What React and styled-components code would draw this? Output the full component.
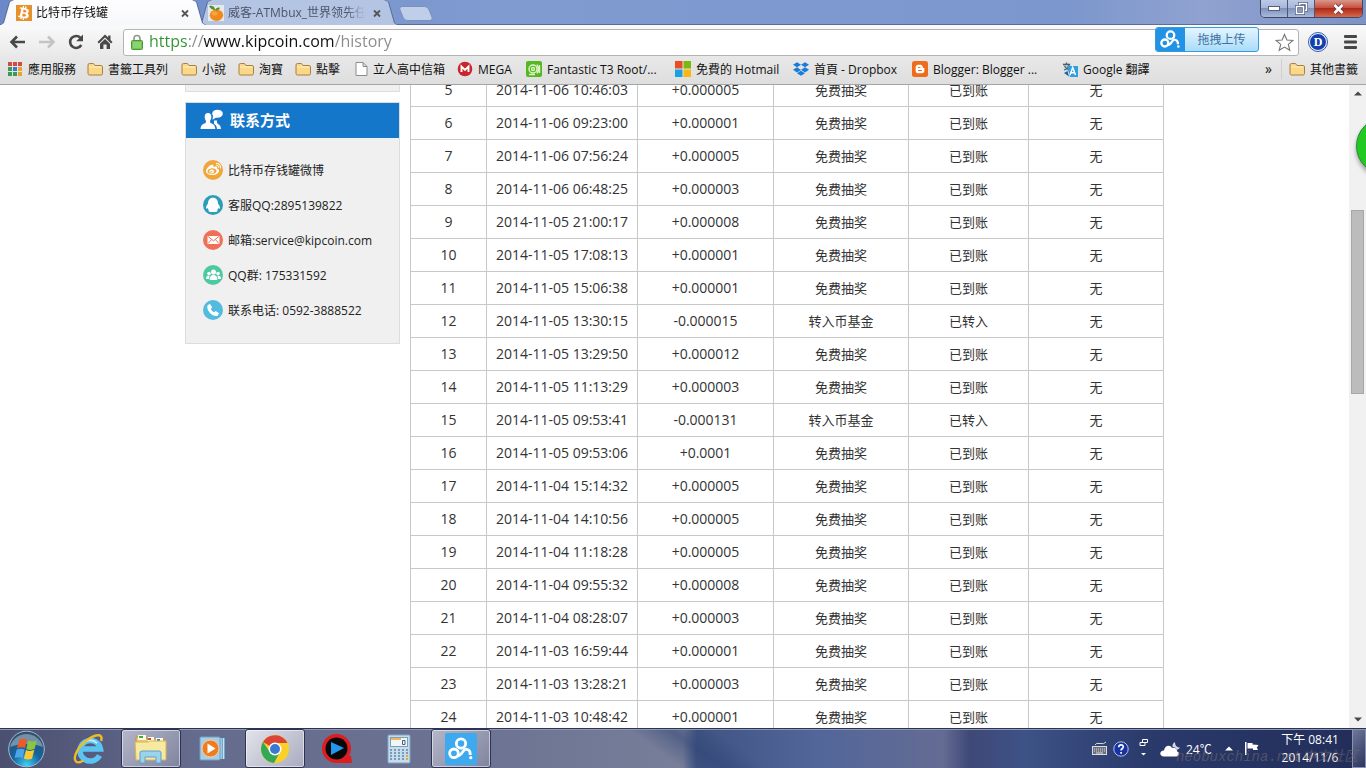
import React from 'react';
import styled, { createGlobalStyle } from 'styled-components';
import { FaBtc, FaDropbox, FaWeibo, FaBloggerB } from 'react-icons/fa';

const Sans = '"Open Sans", "Noto Sans CJK SC", sans-serif';
const SansTC = '"Open Sans", "Noto Sans CJK TC", sans-serif';
const Line = '#c8c8c8';

const GlobalStyle = createGlobalStyle`
  * {
    box-sizing: border-box;
  }
  body {
    margin: 0;
    font-family: ${Sans};
    font-size: 12px;
    color: #222;
  }
  button {
    padding: 0;
    border: none;
    background: none;
    font: inherit;
    color: inherit;
  }
  a {
    color: inherit;
    text-decoration: none;
  }
  svg {
    display: block;
    flex: none;
  }
`;

const Screen = styled.div`
  display: flex;
  flex-direction: column;
  height: 100vh;
  overflow: hidden;
  position: relative;
  background: #fff;
`;

/* window frame */

const TitleBar = styled.header`
  display: flex;
  flex: none;
  height: 25px;
  padding-right: 3px;
  border-bottom: 1px solid #596c9c;
  background: linear-gradient(90deg, #6b89c9 0%, #7f9bd0 36%, #7c97cd 78%, #8fa2d0 88%, #7d93c4 100%);
`;

const TabButton = styled.div`
  display: flex;
  align-items: center;
  position: relative;
  z-index: ${({ $active }) => ($active ? 2 : 1)};
  width: ${({ $active }) => ($active ? 206 : 200)}px;
  height: 25px;
  margin-left: ${({ $active }) => ($active ? 0 : -8)}px;
  padding: 0 15px 0 ${({ $active }) => ($active ? 16 : 10)}px;
  color: ${({ $active }) => ($active ? '#111' : '#4c5468')};
  &::before,
  &::after {
    content: '';
    position: absolute;
    inset: 0;
    z-index: -1;
    background: #5a6c98;
    clip-path: polygon(0 100%, 3px 92%, 9px 8%, 13px 0, calc(100% - 13px) 0, calc(100% - 9px) 8%, calc(100% - 3px) 92%, 100% 100%);
  }
  &::after {
    inset: 0 1px;
    background: ${({ $active }) => ($active ? 'linear-gradient(#fdfdfe, #f7f8fa)' : '#b4c4e3')};
  }
`;

const TabTitle = styled.span`
  flex: 1;
  margin-left: 4px;
  overflow: hidden;
  white-space: nowrap;
  line-height: 24px;
  mask-image: linear-gradient(90deg, #000 86%, transparent);
`;

const CloseTab = styled.button`
  width: 12px;
  margin-left: 6px;
`;

const NewTab = styled.button`
  width: 30px;
  height: 15px;
  margin: 6px 0 0 3px;
  border: 1px solid #7a91c0;
  border-radius: 4px;
  background: #c0cfe9;
  transform: skewX(22deg);
`;

const WindowButtons = styled.div`
  display: flex;
  height: 18px;
  margin-left: auto;
  border: 1px solid #3f4867;
  border-top: none;
  border-radius: 0 0 5px 5px;
  overflow: hidden;
`;

const WindowButton = styled.button`
  display: flex;
  align-items: center;
  justify-content: center;
  width: ${({ $close }) => ($close ? 47 : 27)}px;
  border-right: ${({ $close }) => ($close ? 'none' : '1px solid #4b5678')};
  background: ${({ $close }) =>
    $close
      ? 'linear-gradient(#d9978c, #c8503e 45%, #ac2a17 50%, #d6694c)'
      : 'linear-gradient(#bccae6, #a7b7d8 45%, #7f92bb 50%, #a9b9db)'};
`;

const ToolBar = styled.div`
  display: flex;
  align-items: center;
  flex: none;
  height: 31px;
  padding: 3px 9px 0 8px;
  background: linear-gradient(#fafafa, #e9e9e9);
`;

const NavButtons = styled.div`
  display: flex;
  gap: 9px;
  width: 115px;
  padding-bottom: 1px;
`;

const NavButton = styled.button`
  width: 20px;
  height: 20px;
`;

const Omnibox = styled.label`
  display: flex;
  align-items: center;
  flex: 1;
  height: 27px;
  padding: 0 4px 0 7px;
  border: 1px solid #b4b4b4;
  border-radius: 3px;
  background: #fff;
`;

const UrlInput = styled.input`
  flex: 1;
  min-width: 0;
  height: 24px;
  margin-left: 6px;
  padding: 0 0 2px;
  border: none;
  outline: none;
  font-family: ${Sans};
  font-size: 16px;
  color: transparent;
  background: linear-gradient(90deg, #2f9331 39px, #8b8b8b 39px 54px, #111 54px 186px, #8b8b8b 186px);
  background-clip: text;
`;

const RoundBadge = styled.button`
  width: 18px;
  height: 18px;
  margin: 0 17px 0 10px;
  border: 1px solid #fff;
  border-radius: 50%;
  outline: 1px solid #3459b5;
  background: #1440ae;
  color: #fff;
  font: bold 12px/15px 'Liberation Serif', serif;
`;

const BookmarkBar = styled.nav`
  display: flex;
  align-items: center;
  flex: none;
  height: 29px;
  padding: 0 8px 2px 7px;
  border-bottom: 1px solid #a5a5a5;
  background: linear-gradient(#e8e8e8, #dedede);
  font-family: ${SansTC};
  color: #111;
`;

const Bookmark = styled.a`
  display: flex;
  align-items: center;
  flex: none;
  gap: 5px;
  width: ${({ $width }) => ($width ? `${$width}px` : 'auto')};
  white-space: nowrap;
`;

const Overflow = styled.button`
  margin-left: auto;
  padding-right: 9px;
  font-size: 14px;
  line-height: 16px;
`;

const Divider = styled.span`
  width: 1px;
  height: 20px;
  margin-right: 7px;
  background: #cfcfcf;
`;

const UploadBox = styled.button`
  display: flex;
  position: absolute;
  z-index: 5;
  top: 27px;
  right: 107px;
  width: 104px;
  height: 25px;
  border: 1px solid #3d9ad9;
  border-radius: 3px;
  overflow: hidden;
  background: linear-gradient(#e3f5ff, #a9dcfb);
  color: #41719d;
`;

const UploadLogo = styled.span`
  display: flex;
  align-items: center;
  justify-content: center;
  width: 29px;
  height: 23px;
  background: #2192e4;
`;

const UploadText = styled.span`
  flex: 1;
  line-height: 24px;
`;

/* page */

const Viewport = styled.div`
  display: flex;
  flex: 1;
  min-height: 0;
  position: relative;
  overflow: hidden;
`;

const Page = styled.main`
  flex: 1;
  overflow: hidden;
`;

/* the page is scrolled a third of a row past row 5 */
const Content = styled.div`
  display: flex;
  align-items: flex-start;
  gap: 10px;
  max-width: 979px;
  margin: -12px auto 0;
`;

const SideBar = styled.aside`
  display: flex;
  flex-direction: column;
  flex: none;
  gap: 10px;
  width: 215px;
`;

const Panel = styled.section`
  min-height: 19px;
  border: 1px solid #ddd;
  background: #f0f0f0;
`;

const PanelTitle = styled.h2`
  display: flex;
  align-items: center;
  gap: 6px;
  height: 35px;
  margin: 0;
  padding: 0 0 2px 14px;
  background: #1577c9;
  color: #fff;
  font-size: 15px;
  font-weight: 700;
`;

const ContactList = styled.ul`
  margin: 0;
  padding: 14px 17px 16px;
  list-style: none;
`;

const ContactItem = styled.li`
  display: flex;
  align-items: center;
  gap: 5px;
  height: 35px;
  color: #222;
  white-space: nowrap;
`;

const Dot = styled.span`
  display: flex;
  align-items: center;
  justify-content: center;
  width: 20px;
  height: 20px;
  border-radius: 50%;
  background: ${({ $color }) => $color};
  color: #fff;
`;

const History = styled.table`
  flex: none;
  table-layout: fixed;
  border-collapse: collapse;
  width: 754px;
  color: #333;
  font-size: 13px;
`;

const Cell = styled.td`
  height: 33px;
  padding: 0;
  border: 1px solid ${Line};
  text-align: center;
  line-height: 20px;
  font-size: ${({ $num }) => ($num ? 14 : 13)}px;
`;

const ScrollBar = styled.div`
  display: flex;
  flex-direction: column;
  flex: none;
  width: 17px;
  padding: 0 2px;
  background: #f1f1f1;
`;

const ScrollArrow = styled.button`
  display: flex;
  align-items: center;
  justify-content: center;
  height: 17px;
`;

const Track = styled.div`
  flex: ${({ $grow }) => $grow};
`;

const Thumb = styled.div`
  flex: 183;
  border: 1px solid #a8a8a8;
  background: #bcbcbc;
`;

const GreenBall = styled.button`
  position: absolute;
  top: 32px;
  right: -48px;
  width: 58px;
  height: 58px;
  border: 1px solid #2c8a3a;
  border-radius: 50%;
  background: #22c922;
  box-shadow: 0 3px 4px rgba(0, 0, 0, 0.35);
`;

/* taskbar */

const TaskBar = styled.footer`
  display: flex;
  flex: none;
  height: 40px;
  position: relative;
  border-top: 1px solid #2b3357;
  box-shadow: inset 0 1px 0 #8f98b4;
  color: #fff;
  background: linear-gradient(35deg, transparent 0 48%, rgba(46, 66, 116, 0.5) 51%, transparent 54%),
    linear-gradient(90deg, #4b4f70 0, #646b8c 14%, #6b7292 33%, #777e99 50%, #3f5482 51%, #52669a 60%, #646c93 69%, #3f4977 71%, #3d5286 75%, #2a3a6b 84%, #222d59 100%);
`;

const StartButton = styled.button`
  width: 54px;
  padding-left: 7px;
`;

const Tasks = styled.div`
  display: flex;
  gap: 2px;
  padding: 0 0 0 5px;
`;

const Task = styled.button`
  display: flex;
  align-items: center;
  justify-content: center;
  width: 60px;
  height: 39px;
  border: 1px solid ${({ $open }) => ($open ? '#2d3350' : 'transparent')};
  border-radius: 3px;
  box-shadow: ${({ $open }) => ($open ? 'inset 0 0 0 1px rgba(255, 255, 255, 0.5)' : 'none')};
  background: ${({ $open, $front }) =>
    $front
      ? 'linear-gradient(135deg, #e2e3ea, #a9acc0)'
      : $open
        ? 'linear-gradient(135deg, #b4b6c8, #7f849f)'
        : 'none'};
`;

const Tray = styled.div`
  display: flex;
  align-items: center;
  margin-left: auto;
  font-family: ${SansTC};
`;

const TrayIcon = styled.button`
  display: flex;
  justify-content: center;
  width: ${({ $width }) => $width}px;
`;

const Weather = styled.span`
  width: 36px;
`;

const Clock = styled.time`
  width: 84px;
  line-height: 18px;
  text-align: center;
`;

const ShowDesktop = styled.button`
  width: 14px;
  height: 39px;
  border: 1px solid #8b93ae;
  background: linear-gradient(135deg, #6d7797, #2b3560);
`;

const WaterMark = styled.span`
  position: absolute;
  right: 8px;
  bottom: 1px;
  color: rgba(110, 104, 106, 0.6);
  font: italic 14px/20px 'Liberation Mono', 'Noto Sans CJK SC', monospace;
  white-space: nowrap;
  pointer-events: none;
`;

const BitcoinIcon = () => (
  <svg width="16" height="16" viewBox="0 0 16 16">
    <rect width="16" height="16" fill="#e8912c" />
    <g transform="rotate(12 8 8)">
      <FaBtc x="1" y="1" size={14} color="#fff" />
    </g>
  </svg>
);

const OrangeIcon = () => (
  <svg width="16" height="16" viewBox="0 0 16 16">
    <rect width="16" height="16" fill="#e4e9ee" />
    <ellipse cx="8.500" cy="10.200" rx="6.700" ry="5.700" fill="#ef8a1d" />
    <ellipse cx="6.500" cy="8.600" rx="3" ry="2" fill="#f7a63e" />
    <path d="M7 5C4 5 2 3 1 1c4-1 6 1 6 4zM7 5c1-2 3-3 5-2-1 2-3 3-5 2z" fill="#5b8f2b" />
  </svg>
);

const CrossIcon = () => (
  <svg width="12" height="12" viewBox="0 0 12 12" stroke="#555" strokeWidth="1.8">
    <path d="M3 3.5l6 6M9 3.5l-6 6" />
  </svg>
);

const ArrowIcon = ({ color, flip }) => (
  <svg width="20" height="20" viewBox="0 0 20 20" fill="none" stroke={color} strokeWidth="2.6">
    <path d={flip ? 'M2 10h14M11 4.5l5.5 5.5-5.5 5.5' : 'M17 10H4M9 4.5L3.500 10 9 15.500'} />
  </svg>
);

const ReloadIcon = () => (
  <svg width="20" height="20" viewBox="0 0 20 20">
    <path d="M15.300 13a6 6 0 1 1-.8-7.200" fill="none" stroke="#484848" strokeWidth="2.6" />
    <path d="M17 2.500v6.800h-6.800z" fill="#484848" />
  </svg>
);

const HomeIcon = () => (
  <svg width="20" height="20" viewBox="0 0 20 20" fill="#484848">
    <path d="M10 2.500L2.500 10l1.400 1.400L10 5.500l6.100 5.900L17.500 10l-2-2V3.500h-2.300V5.600z" />
    <path d="M5 11.700l5-4.800 5 4.800V17h-3.400v-4.500H8.400V17H5z" />
  </svg>
);

const LockIcon = () => (
  <svg width="12" height="16" viewBox="0 0 12 16">
    <path d="M3 7V4.500a3 3 0 0 1 6 0V7" fill="none" stroke="#8d9a8b" strokeWidth="1.6" />
    <rect x=".5" y="6.500" width="11" height="9" rx="1" fill="#72c553" stroke="#4c9637" />
    <path d="M2 9h8M2 11h8M2 13h8" stroke="#a4e18a" />
  </svg>
);

const StarIcon = () => (
  <svg width="19" height="19" viewBox="0 0 19 19" fill="#fff" stroke="#777" strokeWidth="1.1">
    <path d="M9.500 1.500l2.400 5.500 6 .5-4.600 3.900 1.500 5.900-5.300-3.200-5.300 3.200 1.500-5.900L1.100 7.500l6-.5z" />
  </svg>
);

const MenuIcon = () => (
  <svg width="13" height="14" viewBox="0 0 13 14" fill="#484848">
    <rect width="13" height="3" rx="1" />
    <rect y="5.500" width="13" height="3" rx="1" />
    <rect y="11" width="13" height="3" rx="1" />
  </svg>
);

const CloudDiskIcon = ({ size }) => (
  <svg width={size} height={size} viewBox="0 0 24 24" fill="none" stroke="#fff" strokeWidth="2.600">
    <circle cx="12" cy="7" r="4.300" />
    <circle cx="5.500" cy="16" r="4" />
    <path d="M8.500 18.500c3 0 4-2 5.500-4.500 2-3.300 6.500-1.500 6.500 2.500v1" />
    <circle cx="21" cy="20" r="1.500" fill="#fff" stroke="none" />
  </svg>
);

const AppsIcon = () => (
  <svg width="16" height="16" viewBox="0 0 16 16">
    {['#d24a43', '#d24a43', '#d24a43', '#3c9a56', '#3f78c9', '#e6a52f', '#3c9a56', '#3c9a56', '#e6a52f'].map((c, i) => (
      <rect key={i} x={1 + (i % 3) * 5} y={1 + Math.floor(i / 3) * 5} width="4" height="4" fill={c} />
    ))}
  </svg>
);

const FolderIcon = () => (
  <svg width="16" height="16" viewBox="0 0 16 16">
    <path d="M1 4q0-1.500 1.500-1.500h4L8 4.500h6q1.500 0 1.500 1.500v6.500q0 1.500-1.500 1.500H2.500Q1 14 1 12.500z" fill="#fbd789" stroke="#a9803c" />
    <path d="M2 6h12.500" stroke="#fff0c4" />
  </svg>
);

const PageIcon = () => (
  <svg width="13" height="16" viewBox="0 0 13 16">
    <path d="M1 1.500h7l4 4v9H1zM8 1.500v4h4" fill="#fff" stroke="#8c8c8c" />
  </svg>
);

const MegaIcon = () => (
  <svg width="16" height="16" viewBox="0 0 16 16">
    <circle cx="8" cy="8" r="7.300" fill="#c8252c" />
    <path d="M4.500 11V5.500L8 9l3.500-3.500V11" fill="none" stroke="#fff" strokeWidth="1.900" />
  </svg>
);

const RootIcon = () => (
  <svg width="16" height="16" viewBox="0 0 16 16" fill="none" stroke="#dff5c9" strokeWidth="1.400">
    <rect width="16" height="16" rx="2" fill="#55b820" stroke="none" />
    <circle cx="7" cy="8" r="4" />
    <circle cx="7" cy="8" r="1.500" />
    <path d="M11 3.500q2.500 4.500 0 9M3 13.500h6M13.500 4v8" />
  </svg>
);

const WindowsIcon = () => (
  <svg width="16" height="16" viewBox="0 0 16 16">
    <path d="M0 0h7.500v7.500H0z" fill="#ea4d24" />
    <path d="M8.500 0H16v7.500H8.500z" fill="#7cb80d" />
    <path d="M0 8.500h7.500V16H0z" fill="#17a2e8" />
    <path d="M8.500 8.500H16V16H8.500z" fill="#fab710" />
  </svg>
);

const BloggerIcon = () => (
  <svg width="16" height="16" viewBox="0 0 16 16">
    <rect width="16" height="16" rx="2.500" fill="#ee6c1b" />
    <FaBloggerB x="3" y="3" size={10} color="#fff" />
  </svg>
);

const TranslateIcon = () => (
  <svg width="16" height="16" viewBox="0 0 16 16" fill="none">
    <path d="M0 2h9l1 9H4z" fill="#d3dde0" />
    <path d="M1 3.500h7M4.500 1.500v2M2 9c3-1 5-3 5-5M2.500 5c1 2 3 3.500 5 4" stroke="#476068" strokeWidth="1.300" />
    <path d="M5 5h11v11H8z" fill="#2f9fe0" />
    <path d="M2 12l5 3.500L5.500 10z" fill="#1b62a8" />
    <path d="M8 14l2.700-7.500L13.500 14M9 11.700h3.600" stroke="#fff" strokeWidth="1.500" />
  </svg>
);

const PeopleIcon = () => (
  <svg width="24" height="22" viewBox="0 0 24 22" fill="#fff">
    <path d="M8 4c2.500 0 3.500 2 3.300 4.200-.1 1.800-.8 2.800-1.300 3.800 0 1.800.3 2 2.300 2.800S15 17 15.300 20H.5c.3-3 1.300-4.300 3.300-5.200S6 13.800 6 12c-.5-1-1.200-2-1.300-3.800C4.500 6 5.500 4 8 4z" />
    <ellipse cx="17.500" cy="4.700" rx="5.300" ry="4" />
    <path d="M13 7l-.5 3.800L17 8zM14 11.500h3c-.2 2 .2 3 1.700 4 1.800 1 2 2 2.300 4.500h-4c-.3-2.500-1-4-3-5.200z" />
  </svg>
);

const PenguinIcon = () => (
  <svg width="16" height="16" viewBox="0 0 16 16" fill="#fff">
    <path d="M8 .8c3.300 0 5 2.500 5 5.700 1.200 1.500 2.200 3.400 1.900 4.700-.3.800-1.100.4-1.600-.2-.2 1-.7 1.700-1.200 2.200 1.200.8 0 1.800-4.100 1.800s-5.300-1-4.100-1.800c-.5-.5-1-1.200-1.200-2.200-.5.600-1.300 1-1.600.2-.3-1.300.7-3.200 1.900-4.700C3 3.300 4.700.8 8 .8z" />
  </svg>
);

const MailIcon = () => (
  <svg width="13" height="10" viewBox="0 0 13 10">
    <path d="M.5 1h12v8H.500z" fill="#fff" />
    <path d="M1 1.500l5.500 4.300L12 1.500M1 8.500l3.700-4M12 8.500l-3.700-4" fill="none" stroke="#ef7059" />
  </svg>
);

const GroupIcon = () => (
  <svg width="15" height="12" viewBox="0 0 15 12" fill="#fff">
    <circle cx="7.500" cy="3" r="2.500" />
    <circle cx="3" cy="4.500" r="1.800" />
    <circle cx="12" cy="4.500" r="1.800" />
    <path d="M3.700 11c0-4 1.700-5 3.800-5s3.800 1 3.800 5zM0 10c0-2.600 1-3.500 3.500-3.500L3 10zM15 10c0-2.600-1-3.500-3.500-3.500l.5 3.500z" />
  </svg>
);

const PhoneIcon = () => (
  <svg width="14" height="14" viewBox="0 0 14 14">
    <path d="M1.500 2.500L3.800.8l2.400 3.500L4.800 6c.7 1.400 2 2.600 3.400 3.200l1.500-1.300 3.400 2.300-1.500 2.500C7 14.500 0 8 1.500 2.500z" fill="#fff" />
  </svg>
);

const StartIcon = () => (
  <svg width="38" height="38" viewBox="0 0 38 38">
    <defs>
      <radialGradient id="orb" cx=".5" cy=".95" r=".9">
        <stop offset="0" stopColor="#3fd0f5" />
        <stop offset=".45" stopColor="#14649d" />
        <stop offset="1" stopColor="#31506f" />
      </radialGradient>
    </defs>
    <circle cx="19.500" cy="19" r="17.800" fill="url(#orb)" stroke="#a4bccd" />
    <path d="M3 17a17 17 0 0 1 33 0c-10-4-23-4-33 0z" fill="#fff" opacity=".35" />
    <path d="M12.500 9.500c3-1.300 5.300-1 7.500 0L18 18c-2.500-1-5-1-8 .2z" fill="#ee5a25" />
    <path d="M21.300 10.500c2.800 1.200 5.500 1.200 8.500 0l-2.200 8.600c-2.800 1.100-5.500 1-8.300-.1z" fill="#8cc63c" />
    <path d="M9.700 19.600c2.800-1.200 5.400-1.200 8-.2l-2.200 8.500c-2.300-1-5-1-8 .2z" fill="#4da4e8" />
    <path d="M19 20c2.500 1.200 5.200 1.200 8.300.1L25 28.700c-2.700 1.100-5.500 1-8.200-.1z" fill="#fdc82f" />
  </svg>
);

const ExplorerEIcon = () => (
  <svg width="34" height="34" viewBox="0 0 34 34" fill="none">
    <path d="M27.500 23.500a10.300 10.300 0 1 1 1-6.500H10" stroke="#5cc4f2" strokeWidth="5.500" />
    <path d="M25 11a9.500 9.500 0 0 0-15 2" stroke="#b9ecff" strokeWidth="2" />
    <path d="M29 9c2.500-7-4-7.500-12.500-2C7 13 0 25 4 29.500c2 2 5 .5 7.500-1" stroke="#edbd27" strokeWidth="2.400" />
  </svg>
);

const FilesIcon = () => (
  <svg width="34" height="32" viewBox="0 0 34 32">
    <path d="M2 4h10l1 2h17v19H2z" fill="#e6c96e" stroke="#bb9840" />
    <path d="M4 2h8v5H4zM14 4h6v5h-6zM22 5h7v5h-7z" fill="#fffbe2" />
    <path d="M5 3h4v2H5z" fill="#48a648" />
    <path d="M14 5h3v2h-3z" fill="#db4a38" />
    <path d="M23 6h3v2h-3z" fill="#3f82c9" />
    <path d="M1 9h14l1-1h16v19H2z" fill="#f8e9a0" stroke="#d4b65e" />
    <path d="M6 30V20q0-2 2-2h17q2 0 2 2v10h-5v-6H11v6z" fill="#9bd3ee" stroke="#5f9fca" />
  </svg>
);

const PlayerIcon = () => (
  <svg width="28" height="28" viewBox="0 0 28 28">
    <path d="M18 3h8v21h-8z" fill="#6fa9d1" />
    <path d="M22 3v21M24.500 3v21" stroke="#c9e3f3" />
    <rect x="1" y="2" width="20" height="23" rx="1" fill="#a8cee6" stroke="#6e9fc4" />
    <circle cx="11.500" cy="13.500" r="8.500" fill="#ed7d22" stroke="#fbd0a0" />
    <path d="M8.500 8.500l8 5-8 5z" fill="#fff" />
  </svg>
);

const ChromeIcon = () => (
  <svg width="30" height="30" viewBox="0 0 30 30">
    <circle cx="15" cy="15" r="14" fill="#fbd028" />
    <path d="M15 15L2.900 8A14 14 0 0 1 27.500 9H15z" fill="#db4437" />
    <path d="M2.900 8A14 14 0 0 0 14 29l6-11-5-3-5 3z" fill="#35a853" />
    <circle cx="15" cy="15" r="6.500" fill="#fff" />
    <circle cx="15" cy="15" r="5" fill="#3c78cf" />
  </svg>
);

const QvodIcon = () => (
  <svg width="34" height="32" viewBox="0 0 34 32">
    <path d="M20 23h11l1 7H19z" fill="#dd1d1f" />
    <circle cx="16.500" cy="15.500" r="14.500" fill="#dd1d1f" />
    <circle cx="16.500" cy="15.500" r="11" fill="#080808" />
    <path d="M11 9l13 6-13 7z" fill="#2396ee" />
  </svg>
);

const CalcIcon = () => (
  <svg width="24" height="30" viewBox="0 0 24 30">
    <rect x="1" y="1" width="22" height="28" rx="1" fill="#c5dcec" stroke="#7fa8c6" />
    <rect x="3.500" y="3.500" width="17" height="9" fill="#eef6fb" stroke="#819db3" />
    <path d="M4 4h10v2H4z" fill="#f1b55a" />
    <path d="M15.500 6.500h2.500v4h-2.500z" fill="none" stroke="#47617b" />
    {[0, 1, 2, 3].map((r) =>
      [0, 1, 2, 3, 4].map((c) => (
        <rect key={`${r}${c}`} x={3 + c * 4} y={15 + r * 3} width="2" height="2" fill={c === 4 && r > 1 ? '#e1a447' : '#7c9ab5'} />
      ))
    )}
  </svg>
);

const DiskIcon = () => (
  <svg width="32" height="32" viewBox="0 0 32 32">
    <rect width="32" height="32" rx="2" fill="#3da9ee" />
    <g transform="translate(3 3)">
      <CloudDiskIcon size={26} />
    </g>
  </svg>
);

const KeyboardIcon = () => (
  <svg width="15" height="15" viewBox="0 0 15 15" fill="none" stroke="#ddd">
    <path d="M3 4q1-2.500 5-1.500T14 1" />
    <rect x=".5" y="5.500" width="14" height="8" fill="#6b6f80" />
    <path d="M2 8h11M2 10h11" strokeDasharray="1 1" />
    <path d="M4 12h7" />
  </svg>
);

const HelpIcon = () => (
  <svg width="16" height="16" viewBox="0 0 16 16">
    <circle cx="8" cy="8" r="7.200" fill="#1732a4" stroke="#b8c2e4" />
    <path d="M5.700 6.200C5.700 3 10.500 3.200 10.300 6c-.1 1.500-2.200 1.600-2.200 3.500M8.100 11v1.700" fill="none" stroke="#fff" strokeWidth="1.700" />
  </svg>
);

const LanguageIcon = () => (
  <svg width="9" height="24" viewBox="0 0 9 24" fill="none" stroke="#fff">
    <path d="M3.500 5V2.500h5v3H6M1 5.500h5v3H1z" />
    <path d="M2 16h5l-2.500 2.500z" fill="#fff" stroke="none" />
  </svg>
);

const WeatherIcon = () => (
  <svg width="21" height="16" viewBox="0 0 21 16" fill="#fff">
    <path d="M4 15.500c-5 0-5-6 0-6C4.500 4 10.500 3.500 12 7c3-1 5.500 1 5 3.500 3 .5 2.500 5-1 5z" />
    <path d="M4.500 10h10v5h-10z" />
    <path d="M15 1c0 3 1.500 5.500 5 5.500-1 1.500-2 2-3.200 2.300C16 7 14.500 5.800 12.700 6 12 4 13 2 15 1z" opacity=".8" />
  </svg>
);

const FlagIcon = () => (
  <svg width="16" height="15" viewBox="0 0 16 15" fill="#fff">
    <path d="M1 1h1.500v13H1zM3.500 2h5v1.500l6 .5-1.700 2.700L14 9H9V7.500H3.500z" />
  </svg>
);

const Triangle = ({ up, color = '#484848' }) => (
  <svg width="8" height="5" viewBox="0 0 8 5" fill={color}>
    <path d={up ? 'M0 4.500L4 .5l4 4z' : 'M0 .5h8l-4 4z'} />
  </svg>
);

const bookmarks = [
  { icon: <AppsIcon />, text: '應用服務', width: 80 },
  { icon: <FolderIcon />, text: '書籤工具列', width: 94 },
  { icon: <FolderIcon />, text: '小說', width: 57 },
  { icon: <FolderIcon />, text: '淘寶', width: 57 },
  { icon: <FolderIcon />, text: '點擊', width: 60 },
  { icon: <PageIcon />, text: '立人高中信箱', width: 102 },
  { icon: <MegaIcon />, text: 'MEGA', width: 69 },
  { icon: <RootIcon />, text: 'Fantastic T3 Root/...', width: 149 },
  { icon: <WindowsIcon />, text: '免費的 Hotmail', width: 118 },
  { icon: <FaDropbox size={16} color="#1b7bd8" />, text: '首頁 - Dropbox', width: 119 },
  { icon: <BloggerIcon />, text: 'Blogger: Blogger ...', width: 150 },
  { icon: <TranslateIcon />, text: 'Google 翻譯', width: 100 },
];

const contacts = [
  { icon: <FaWeibo size={15} />, color: '#f0a63a', text: '比特币存钱罐微博' },
  { icon: <PenguinIcon />, color: '#2b9dba', text: '客服QQ:2895139822' },
  { icon: <MailIcon />, color: '#ef7059', text: '邮箱:service@kipcoin.com' },
  { icon: <GroupIcon />, color: '#4dc9a2', text: 'QQ群: 175331592' },
  { icon: <PhoneIcon />, color: '#52bbe0', text: '联系电话: 0592-3888522' },
];

const columns = [76, 151, 136, 135, 120, 135];

const records = [
  [5, '2014-11-06 10:46:03', '+0.000005'],
  [6, '2014-11-06 09:23:00', '+0.000001'],
  [7, '2014-11-06 07:56:24', '+0.000005'],
  [8, '2014-11-06 06:48:25', '+0.000003'],
  [9, '2014-11-05 21:00:17', '+0.000008'],
  [10, '2014-11-05 17:08:13', '+0.000001'],
  [11, '2014-11-05 15:06:38', '+0.000001'],
  [12, '2014-11-05 13:30:15', '-0.000015'],
  [13, '2014-11-05 13:29:50', '+0.000012'],
  [14, '2014-11-05 11:13:29', '+0.000003'],
  [15, '2014-11-05 09:53:41', '-0.000131'],
  [16, '2014-11-05 09:53:06', '+0.0001'],
  [17, '2014-11-04 15:14:32', '+0.000005'],
  [18, '2014-11-04 14:10:56', '+0.000005'],
  [19, '2014-11-04 11:18:28', '+0.000005'],
  [20, '2014-11-04 09:55:32', '+0.000008'],
  [21, '2014-11-04 08:28:07', '+0.000003'],
  [22, '2014-11-03 16:59:44', '+0.000001'],
  [23, '2014-11-03 13:28:21', '+0.000003'],
  [24, '2014-11-03 10:48:42', '+0.000001'],
];

const tasks = [
  { name: 'Internet Explorer', icon: <ExplorerEIcon /> },
  { name: 'Explorer', icon: <FilesIcon />, open: true },
  { name: 'Media Player', icon: <PlayerIcon /> },
  { name: 'Chrome', icon: <ChromeIcon />, open: true, front: true },
  { name: 'Player', icon: <QvodIcon /> },
  { name: 'Calculator', icon: <CalcIcon /> },
  { name: 'Cloud disk', icon: <DiskIcon />, open: true },
];

const Browser = () => (
  <>
    <TitleBar>
      <TabButton $active>
        <BitcoinIcon />
        <TabTitle>比特币存钱罐</TabTitle>
        <CloseTab aria-label="Close tab">
          <CrossIcon />
        </CloseTab>
      </TabButton>
      <TabButton>
        <OrangeIcon />
        <TabTitle>威客-ATMbux_世界领先任</TabTitle>
        <CloseTab aria-label="Close tab">
          <CrossIcon />
        </CloseTab>
      </TabButton>
      <NewTab aria-label="New tab" />
      <WindowButtons>
        <WindowButton aria-label="Minimize">
          <svg width="12" height="5" viewBox="0 0 12 5">
            <rect x=".5" y=".5" width="11" height="4" fill="#fff" stroke="#555f7c" />
          </svg>
        </WindowButton>
        <WindowButton aria-label="Restore">
          <svg width="13" height="13" viewBox="0 0 13 13" fill="none">
            <path d="M4.500 3V1.500h7v7H10M1.500 4.500h7v7h-7z" stroke="#4e5876" strokeWidth="3" />
            <path d="M4.500 3V1.500h7v7H10M1.500 4.500h7v7h-7z" stroke="#fff" strokeWidth="1.600" />
          </svg>
        </WindowButton>
        <WindowButton $close aria-label="Close">
          <svg width="13" height="12" viewBox="0 0 13 12" fill="none">
            <path d="M2.500 2l8 8M10.500 2l-8 8" stroke="#6d3842" strokeWidth="4.200" />
            <path d="M2.500 2l8 8M10.500 2l-8 8" stroke="#fff" strokeWidth="2.600" />
          </svg>
        </WindowButton>
      </WindowButtons>
    </TitleBar>
    <ToolBar>
      <NavButtons>
        <NavButton aria-label="Back">
          <ArrowIcon color="#484848" />
        </NavButton>
        <NavButton aria-label="Forward">
          <ArrowIcon color="#c4c4c4" flip />
        </NavButton>
        <NavButton aria-label="Reload">
          <ReloadIcon />
        </NavButton>
        <NavButton aria-label="Home">
          <HomeIcon />
        </NavButton>
      </NavButtons>
      <Omnibox>
        <LockIcon />
        <UrlInput aria-label="Address" defaultValue="https://www.kipcoin.com/history" />
        <StarIcon />
      </Omnibox>
      <RoundBadge>D</RoundBadge>
      <button aria-label="Menu">
        <MenuIcon />
      </button>
    </ToolBar>
    <BookmarkBar>
      {bookmarks.map(({ icon, text, width }) => (
        <Bookmark key={text} href="#" $width={width}>
          {icon}
          {text}
        </Bookmark>
      ))}
      <Overflow>»</Overflow>
      <Divider />
      <Bookmark href="#">
        <FolderIcon />
        其他書籤
      </Bookmark>
    </BookmarkBar>
    <UploadBox>
      <UploadLogo>
        <CloudDiskIcon size={21} />
      </UploadLogo>
      <UploadText>拖拽上传</UploadText>
    </UploadBox>
  </>
);

const Contact = () => (
  <SideBar>
    <Panel />
    <Panel>
      <PanelTitle>
        <PeopleIcon />
        联系方式
      </PanelTitle>
      <ContactList>
        {contacts.map(({ icon, color, text }) => (
          <ContactItem key={text}>
            <Dot $color={color}>{icon}</Dot>
            {text}
          </ContactItem>
        ))}
      </ContactList>
    </Panel>
  </SideBar>
);

const HistoryTable = () => (
  <History>
    <colgroup>
      {columns.map((width, i) => (
        <col key={i} width={width} />
      ))}
    </colgroup>
    <tbody>
      {records.map(([id, date, amount]) => {
        const out = amount.startsWith('-');
        return (
          <tr key={id}>
            <Cell $num>{id}</Cell>
            <Cell $num>{date}</Cell>
            <Cell $num>{amount}</Cell>
            <Cell>{out ? '转入币基金' : '免费抽奖'}</Cell>
            <Cell>{out ? '已转入' : '已到账'}</Cell>
            <Cell>无</Cell>
          </tr>
        );
      })}
    </tbody>
  </History>
);

const App = () => {
  return (
    <Screen>
      <GlobalStyle />
      <Browser />
      <Viewport>
        <Page>
          <Content>
            <Contact />
            <HistoryTable />
          </Content>
        </Page>
        <ScrollBar>
          <ScrollArrow aria-label="Scroll up">
            <Triangle up />
          </ScrollArrow>
          <Track $grow={108} />
          <Thumb />
          <Track $grow={318} />
          <ScrollArrow aria-label="Scroll down">
            <Triangle />
          </ScrollArrow>
        </ScrollBar>
        <GreenBall aria-label="Assistant" />
      </Viewport>
      <TaskBar>
        <StartButton aria-label="Start">
          <StartIcon />
        </StartButton>
        <Tasks>
          {tasks.map(({ name, icon, open, front }) => (
            <Task key={name} aria-label={name} $open={open} $front={front}>
              {icon}
            </Task>
          ))}
        </Tasks>
        <Tray>
          <TrayIcon $width={22} aria-label="Keyboard">
            <KeyboardIcon />
          </TrayIcon>
          <TrayIcon $width={22} aria-label="Help">
            <HelpIcon />
          </TrayIcon>
          <TrayIcon $width={22} aria-label="Language bar">
            <LanguageIcon />
          </TrayIcon>
          <TrayIcon $width={32} aria-label="Weather">
            <WeatherIcon />
          </TrayIcon>
          <Weather>24℃</Weather>
          <TrayIcon $width={14} aria-label="Show hidden icons">
            <Triangle up color="#fff" />
          </TrayIcon>
          <TrayIcon $width={32} aria-label="Action center">
            <FlagIcon />
          </TrayIcon>
          <Clock>
            下午 08:41
            <br />
            2014/11/6
          </Clock>
          <ShowDesktop aria-label="Show desktop" />
        </Tray>
        <WaterMark>neobuxchina.net中文社区</WaterMark>
      </TaskBar>
    </Screen>
  );
};

export default App;
